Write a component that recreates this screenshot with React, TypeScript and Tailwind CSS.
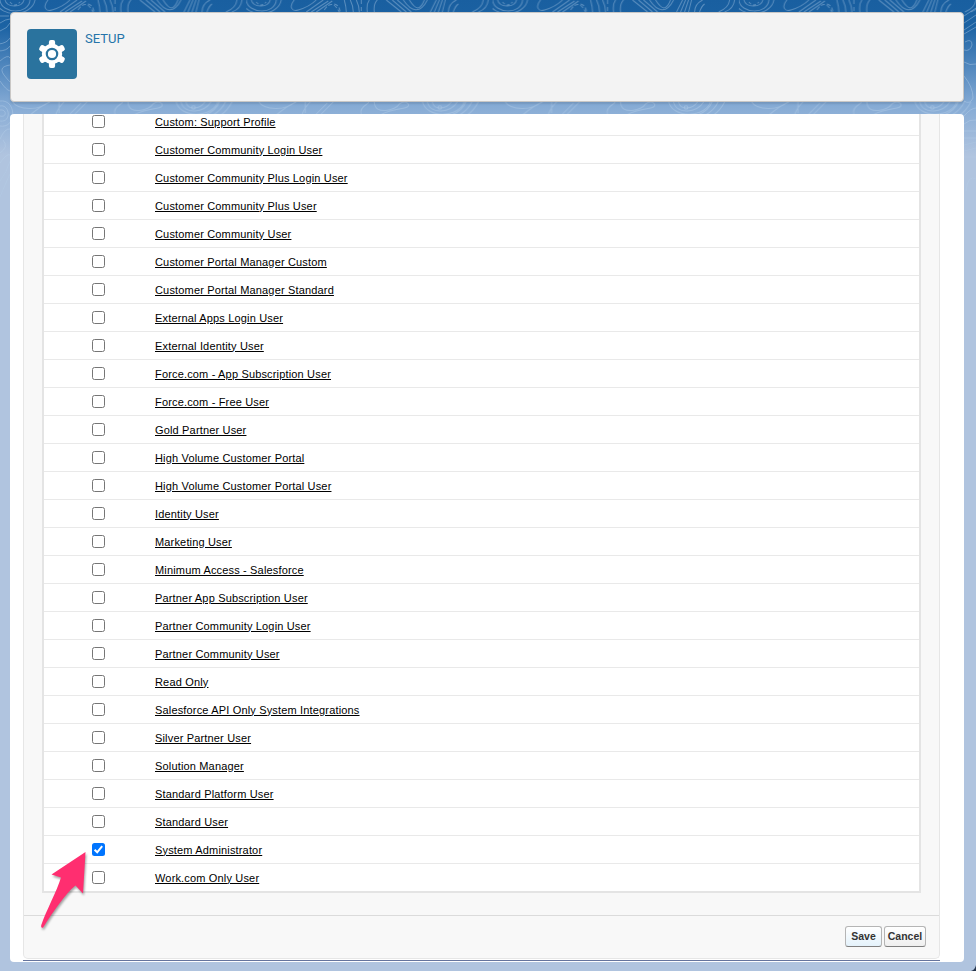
import React from "react";

const profiles = [
  "Custom: Support Profile",
  "Customer Community Login User",
  "Customer Community Plus Login User",
  "Customer Community Plus User",
  "Customer Community User",
  "Customer Portal Manager Custom",
  "Customer Portal Manager Standard",
  "External Apps Login User",
  "External Identity User",
  "Force.com - App Subscription User",
  "Force.com - Free User",
  "Gold Partner User",
  "High Volume Customer Portal",
  "High Volume Customer Portal User",
  "Identity User",
  "Marketing User",
  "Minimum Access - Salesforce",
  "Partner App Subscription User",
  "Partner Community Login User",
  "Partner Community User",
  "Read Only",
  "Salesforce API Only System Integrations",
  "Silver Partner User",
  "Solution Manager",
  "Standard Platform User",
  "Standard User",
  "System Administrator",
  "Work.com Only User",
];

function Contours() {
  return (
    <svg className="absolute inset-0" width="976" height="210" fill="none" stroke="#b9d2ec" strokeOpacity="0.4" strokeWidth="1">
      <defs>
        <pattern id="topo" x="0" y="0" width="246.3" height="210" patternUnits="userSpaceOnUse">
          <path d="M0 0C1 14 29 15 30 0M5 0C7 8 22 8 24 0M-4 2C0 18 32 17 35 0" />
          <path d="M10 2q5 6 10 0" strokeDasharray="3 2" />
          <path d="M48 0C42 7 46 12 52 10C59 8 66 4 70 0M60 12L77 0M65 12L82 1M70 12L86 1" />
          <path d="M78 10q8-12 15 2M88 4q5 1 6 8" strokeDasharray="4 2" />
          <path d="M98 0q2 7 2 12M104 0q3 6 3 12M110 0q3 6 3 12M121 12q-1-8 2-12M128 12q-1-8 3-12" />
          <path d="M115 0v12" strokeDasharray="4 3" />
          <path d="M140 0L155 12M146 0L160 12M151 0L165 12M157 0C165 12 174 14 181 0M163 0C170 11 174 10 178 0" />
          <path d="M184 12L190 0M188 12L193 0M192 12L196 0M196 12L199 0M202 12q0-8 8-12M207 12q2-6 5-8M226 12q10-4 11-12M232 12q9-3 10-12" />
          <path d="M12 101C18 111 40 111 50 101M30 115q12-10 20-13M59 101v12M64 102q-6 6-8 12" />
          <path d="M69 115L81 103M74 115L87 102M115 114C112 106 124 104 122 102M128 102C128 116 150 110 153 104C160 98 167 107 158 108C145 110 139 112 134 115" />
          <path d="M176 101C179 119 214 118 218 101M181 102C184 115 205 113 211 102M186 102C188 111 200 109 205 102M220 101Q216 111 205 115M226 101Q222 110 213 115M232 102Q228 110 221 115" />
          <circle cx="193.5" cy="107.5" r="1.8" />
        </pattern>
      </defs>
      <rect width="976" height="116" fill="url(#topo)" stroke="none" />
      <path d="M0 16h9M0 23q6-4 10-4M0 31q8-3 10-8M-1 44q8-1 11-6M-2 51q9 0 12-5M0 61q8-7 10-3M4 75C-1 68 4 66 10 65M4 75Q7 79 10 82M0 81Q6 90 10 91" />
      <path d="M0 106C10 104 12 123 0 121M0 110C7 109 7 118 0 116M0 101C17 99 17 129 0 126M0 139q5-11 10-10M0 153q9-6 3-13M0 163q7-10 10-8" />
      <path strokeOpacity="0.25" d="M0 181q7-9 10-20M0 197q7-17 10-23" />
      <path d="M976 8l-12 8M976 15l-12 8M976 22l-12 8M976 27l-12 7M965 42Q972 38 972 45Q970 52 964 50M964 62q6 4 12 2M964 76Q973 87 973 98Q970 105 964 101M964 116q7-8 12-8M964 124q6-5 12-4M964 131h12M964 138h12" />
      <path strokeOpacity="0.25" d="M964 145l12-3M964 151l12-3M964 157h12M966 191q2-17 10-12" />
    </svg>
  );
}

function Gear() {
  return (
    <div className="flex h-[50px] w-[50px] items-center justify-center rounded-[4px] bg-[#2a739e]">
      <svg width="28" height="30" viewBox="0 0 28 30" fill="none">
        <g fill="#fff">
          <circle cx="14" cy="15" r="10.2" />
          <rect x="10.9" y="1.1" width="6.2" height="27.8" rx="2" />
          <rect x="10.9" y="1.1" width="6.2" height="27.8" rx="2" transform="rotate(60 14 15)" />
          <rect x="10.9" y="1.1" width="6.2" height="27.8" rx="2" transform="rotate(120 14 15)" />
        </g>
        <circle cx="14" cy="15" r="5.2" stroke="#2a739e" strokeWidth="2.2" />
      </svg>
    </div>
  );
}

function Check({ checked }: { checked: boolean }) {
  return (
    <span
      role="checkbox"
      aria-checked={checked}
      className={
        checked
          ? "flex h-[13px] w-[13px] items-center justify-center rounded-[2.5px] bg-[#0075ff]"
          : "block h-[13px] w-[13px] rounded-[2.5px] border border-[#767676] bg-white"
      }
    >
      {checked && (
        <svg width="13" height="13" viewBox="0 0 13 13" fill="none" stroke="#fff" strokeWidth="2">
          <path d="M2.6 6.8L5.2 9.3L10.2 3.1" />
        </svg>
      )}
    </span>
  );
}

export default function App() {
  return (
    <div className="relative h-[971px] w-[976px] overflow-hidden bg-[#b0c4df] font-['Liberation_Sans',Arial,sans-serif]">
      <div className="absolute inset-x-0 top-0 h-[210px] bg-[linear-gradient(#195fa0_0px,#1b62a3_26px,#4f86bd_65px,#86abd5_106px,#b0c4df_155px)]" />
      <Contours />
      <div className="relative flex h-full flex-col pt-3 pr-3 pb-[9px] pl-[10px]">
        <header className="flex h-[90px] shrink-0 gap-2 rounded-[4px] border border-[#c9c7c5] bg-[#f3f3f3] pt-4 pl-4 shadow-[0_2px_2px_rgba(0,0,0,0.1)]">
          <Gear />
          <span className="pt-[1px] font-[Roboto,sans-serif] text-[13px] leading-[18px] text-[#2574a9]">SETUP</span>
        </header>
        <main className="mt-3 h-[848px] shrink-0 overflow-hidden rounded-[4px] bg-white pl-[13px]">
          <div className="h-[847px] w-[917px] border-b border-[#65749d]">
            <div className="h-[845px] rounded-b-[5px] border-x border-b border-[#e6e6e6] bg-[#f8f8f8]">
              <div className="ml-[18px] h-[779px] w-[879px] overflow-hidden border-x-2 border-b-2 border-[#e4e4e4] bg-white">
                {profiles.map((name, index) => (
                  <div
                    key={name}
                    className="flex h-7 items-center border-b border-[#e9e9e9] pl-12 first:h-[22px] first:items-start first:pt-px last:border-transparent"
                  >
                    <Check checked={index === 26} />
                    <a className="ml-[50px] text-[11px] leading-[14px] tracking-[0.165px] text-black underline">{name}</a>
                  </div>
                ))}
              </div>
              <div className="mt-[22px] flex h-[44px] items-start justify-end gap-[2px] border-t border-[#dbdbdb] pt-[10px] pr-[13px] text-[10.5px] font-bold text-[#333]">
                <button className="h-[21px] w-[37px] rounded-[3px] border border-[#b5b5b5] border-b-[#7f7f7f] bg-linear-to-b from-white to-[#e4f2fb]">Save</button>
                <button className="h-[21px] w-[42px] rounded-[3px] border border-[#b5b5b5] border-b-[#7f7f7f] bg-linear-to-b from-white to-[#efefef]">Cancel</button>
              </div>
            </div>
          </div>
        </main>
      </div>
      <svg className="absolute top-[848px] left-[36px] drop-shadow-[1px_2px_1px_rgba(0,0,0,0.35)]" width="60" height="90" viewBox="36 848 60 90" fill="#ff2e70">
        <path d="M85.5 852L51.5 874.5L61 877.5C57 891 46 911 41.3 925Q40.5 928.5 43.2 927.5C53 912 65 894 75.5 885.5L83 893.5Z" />
      </svg>
      <svg className="absolute right-0 bottom-0" width="10" height="10">
        <path d="M10 4Q9 9 5 10H10Z" fill="#26364d" />
      </svg>
    </div>
  );
}
